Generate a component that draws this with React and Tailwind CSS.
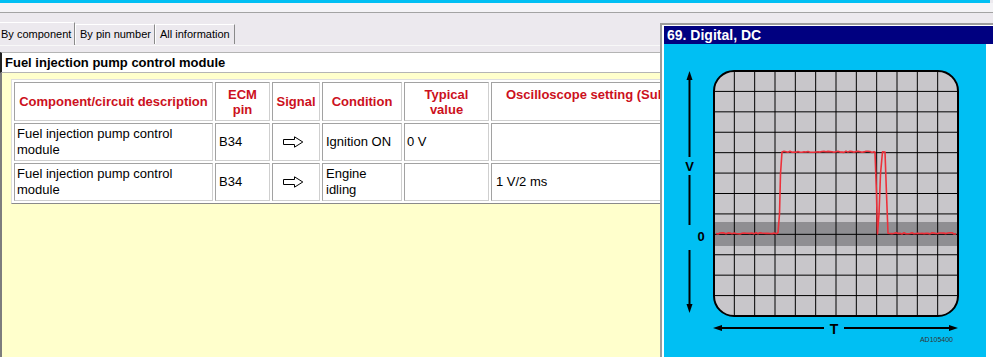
import React from 'react'

const SX = 50
const SY = 27
const SW = 244
const SH = 245

function tracePath() {
  let s = 11
  const rnd = () => {
    s = (s * 9301 + 49297) % 233280
    return s / 233280 - 0.5
  }
  const pts = []
  const seg = (x0, x1, y) => {
    for (let x = x0; x <= x1; x += 2) pts.push([x, y + rnd() * 1.4])
  }
  seg(52, 114, 189.3)
  pts.push([115.5, 170], [116.5, 130], [118, 108])
  seg(120, 210, 107.8)
  pts.push([211, 108], [212.5, 150], [213.5, 190], [215, 170], [216.5, 130], [218.5, 107.8], [221, 108], [222.5, 150], [224, 189.3])
  seg(226, 292, 189.3)
  return 'M' + pts.map((p) => p[0].toFixed(1) + ' ' + p[1].toFixed(1)).join(' L')
}

function Scope() {
  const cols = Array.from({ length: 11 }, (_, i) => SX + ((i + 1) * SW) / 12)
  const rows = Array.from({ length: 11 }, (_, i) => SY + ((i + 1) * SH) / 12)
  return (
    <svg width="322" height="313" viewBox="0 0 322 313">
      <defs>
        <clipPath id="scr">
          <rect x={SX} y={SY} width={SW} height={SH} rx="20" />
        </clipPath>
      </defs>
      <g clipPath="url(#scr)">
        <rect x={SX} y={SY} width={SW} height={SH} fill="#c8c6ca" />
        <rect x={SX} y="178" width={SW} height="24" fill="#8f8e92" />
        {cols.map((x) => (
          <line key={'c' + x} x1={x} y1={SY} x2={x} y2={SY + SH} stroke="#000" strokeWidth="1" />
        ))}
        {rows.map((y) => (
          <line key={'r' + y} x1={SX} y1={y} x2={SX + SW} y2={y} stroke="#000" strokeWidth="1" />
        ))}
        <path d={tracePath()} fill="none" stroke="#ec303a" strokeWidth="1.6" strokeLinejoin="round" />
      </g>
      <rect x={SX} y={SY} width={SW} height={SH} rx="20" fill="none" stroke="#000" strokeWidth="2" />

      {/* V axis */}
      <line x1="25.5" y1="34" x2="25.5" y2="113" stroke="#000" strokeWidth="2" />
      <line x1="25.5" y1="131" x2="25.5" y2="181" stroke="#000" strokeWidth="2" />
      <line x1="25.5" y1="206" x2="25.5" y2="262" stroke="#000" strokeWidth="2" />
      <polygon points="25.5,27 22.5,36 28.5,36" fill="#000" />
      <polygon points="25.5,269 22.5,260 28.5,260" fill="#000" />
      <text x="25.5" y="122" textAnchor="middle" dominantBaseline="central" fontSize="13" fontWeight="bold" fontFamily="Liberation Sans, Arial, sans-serif">V</text>
      <text x="37" y="192" textAnchor="middle" dominantBaseline="central" fontSize="13" fontWeight="bold" fontFamily="Liberation Sans, Arial, sans-serif">0</text>

      {/* T axis */}
      <line x1="56" y1="284" x2="160" y2="284" stroke="#000" strokeWidth="2" />
      <line x1="180" y1="284" x2="287" y2="284" stroke="#000" strokeWidth="2" />
      <polygon points="49,284 58,281 58,287" fill="#000" />
      <polygon points="294,284 285,281 285,287" fill="#000" />
      <text x="170" y="285" textAnchor="middle" dominantBaseline="central" fontSize="14" fontWeight="bold" fontFamily="Liberation Sans, Arial, sans-serif">T</text>
      <text x="289" y="295" textAnchor="end" dominantBaseline="central" fontSize="7" fill="#333" fontFamily="Liberation Sans, Arial, sans-serif">AD105400</text>
    </svg>
  )
}

function SignalArrow() {
  return (
    <svg width="21" height="12" viewBox="0 0 21 12">
      <path d="M0.5 3.5 H11.5 V0.8 L19.8 6 L11.5 11.2 V8.5 H0.5 Z" fill="#fff" stroke="#000" strokeWidth="1" />
    </svg>
  )
}

const cellBorder = 'border border-t-[#a2a2a2] border-l-[#a2a2a2] border-r-[#cfcfcf] border-b-[#cfcfcf]'

const rows = [
  { desc: 'Fuel injection pump control module', pin: 'B34', cond: 'Ignition ON', typ: '0 V', osc: '' },
  { desc: 'Fuel injection pump control module', pin: 'B34', cond: 'Engine idling', typ: '', osc: '1 V/2 ms' },
]

export default function App() {
  return (
    <div className="relative w-[993px] h-[357px] overflow-hidden bg-[#ece9ee] font-['Liberation_Sans',Arial,sans-serif] text-black">
      <div className="flex flex-col h-full">
        <div className="h-[3px] w-[990px] bg-[#00bff3]" />
        <div className="h-[9px] bg-[#f4f3f6]" />
        <div className="h-px bg-[#a3a3a3]" />
        <div className="h-[9px]" />

        {/* tabs */}
        <div className="h-[23px] flex items-end text-[11px] leading-none">
          <div className="h-[23px] w-[75px] flex items-center pl-[1px] border-t border-white border-r border-r-[#8a8a8a] bg-[#ece9ee]">
            By component
          </div>
          <div className="h-[20px] mb-[1px] w-[80px] flex items-center pl-[4px] border-l border-t border-white border-r border-r-[#8a8a8a]">
            By pin number
          </div>
          <div className="h-[20px] mb-[1px] w-[80px] flex items-center pl-[4px] border-l border-t border-white border-r border-r-[#8a8a8a]">
            All information
          </div>
        </div>
        <div className="h-[7px] w-[660px] border-t border-[#f8f8f8]" />

        {/* panel */}
        <div className="w-[660px] flex-1 flex flex-col">
          <div className="h-[21px] bg-white border-t border-b border-[#b4b4b4] border-l-2 border-l-[#222] flex items-center pl-[3px] text-[13px] font-bold">
            Fuel injection pump control module
          </div>
          <div className="flex-1 bg-[#ffffcc] border-l-2 border-[#7d7d7d] pt-[6px] pl-[9px] overflow-hidden">
            <table className="table-fixed bg-white border border-t-[#dedede] border-l-[#dedede] border-r-[#8a8a8a] border-b-[#8a8a8a] border-separate border-spacing-[2px] w-[840px]">
              <colgroup>
                <col className="w-[199px]" />
                <col className="w-[55px]" />
                <col className="w-[48px]" />
                <col className="w-[80px]" />
                <col className="w-[85px]" />
                <col className="w-[360px]" />
              </colgroup>
              <thead>
                <tr className="h-[39px] text-[13px] font-bold text-[#cc1020] leading-[15px]">
                  <th className={`${cellBorder} text-center align-middle`}>Component/circuit description</th>
                  <th className={`${cellBorder} text-center align-middle`}>ECM<br />pin</th>
                  <th className={`${cellBorder} text-center align-middle`}>Signal</th>
                  <th className={`${cellBorder} text-center align-middle`}>Condition</th>
                  <th className={`${cellBorder} text-center align-middle`}>Typical<br />value</th>
                  <th className={`${cellBorder} text-left align-middle pl-[14px] whitespace-nowrap`}>
                    Oscilloscope setting (Sub-D)<br />
                    {'\u00a0'}
                  </th>
                </tr>
              </thead>
              <tbody className="text-[13px] leading-[16px]">
                {rows.map((r, i) => (
                  <tr key={i} className="h-[38px]">
                    <td className={`${cellBorder} px-[2px] align-middle`}>{r.desc}</td>
                    <td className={`${cellBorder} px-[3px] align-middle`}>{r.pin}</td>
                    <td className={`${cellBorder} pl-[10px] align-middle`}>
                      <div className="flex items-center">
                        <SignalArrow />
                      </div>
                    </td>
                    <td className={`${cellBorder} px-[3px] align-middle`}>{r.cond}</td>
                    <td className={`${cellBorder} px-[2px] align-middle`}>{r.typ}</td>
                    <td className={`${cellBorder} px-[4px] align-middle`}>{r.osc}</td>
                  </tr>
                ))}
              </tbody>
            </table>
          </div>
        </div>
      </div>

      {/* scope window */}
      <div className="absolute left-[660px] top-[23px] w-[333px] h-[334px] bg-white border-l-2 border-t-2 border-[#9c9c9c] pl-[2px] pt-px flex flex-col">
        <div className="h-[18px] bg-[#000080] text-white text-[14px] font-bold flex items-center pl-[3px] leading-none">
          69. Digital, DC
        </div>
        <div className="flex-1 flex">
          <div className="w-[322px] bg-[#00bff3]">
            <Scope />
          </div>
        </div>
      </div>
    </div>
  )
}
